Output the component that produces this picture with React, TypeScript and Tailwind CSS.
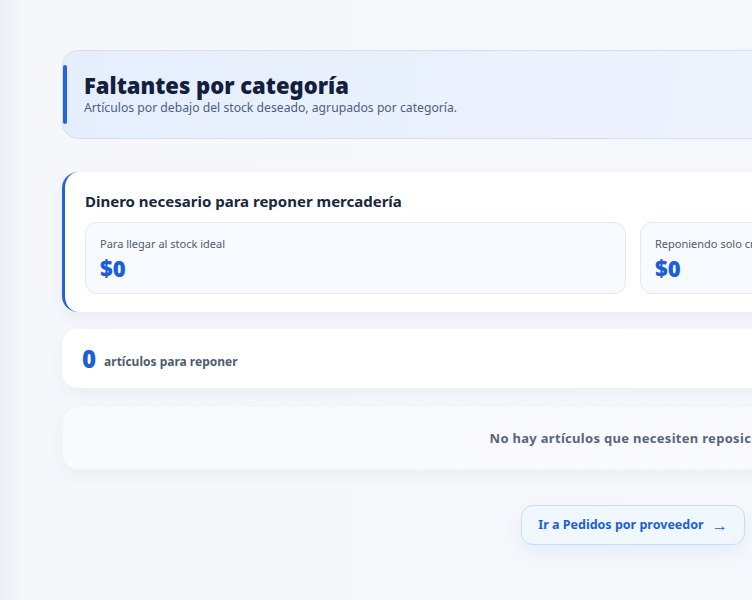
import React from "react";

export default function App() {
  return (
    <div
      className="min-h-[600px] w-full overflow-hidden bg-[linear-gradient(to_right,#eceef3_0px,#f5f7fb_22px,#f6f8fc_100%)]"
      style={{ fontFamily: '"Noto Sans", "Open Sans", sans-serif' }}
    >
      <div className="w-[1142px] ml-[62px] pt-[50px] pb-[56px] flex flex-col">
        {/* Header */}
        <div className="relative rounded-[16px] border border-[#d3def0] bg-[linear-gradient(100deg,#e5eefd_0%,#edf3fd_60%,#f1f5fc_100%)] h-[89px] flex flex-col justify-center pl-[21px]">
          <div className="absolute left-0 top-[14px] bottom-[14px] w-[4px] rounded-full bg-[#2563d9]" />
          <h1 className="text-[22px] leading-[26px] font-black text-[#13203d] mt-[-2px]">
            Faltantes por categoría
          </h1>
          <p className="text-[12.2px] leading-[16px] mt-[2px] text-[#4b5e7d]">
            Artículos por debajo del stock deseado, agrupados por categoría.
          </p>
        </div>

        {/* Money card */}
        <div className="mt-[33px] rounded-[16px] bg-white border-l-[3px] border-[#2563d9] shadow-[0_6px_16px_rgba(30,50,90,0.06)] pl-[20px] pr-[23px] pt-[19px] pb-[18px]">
          <h2 className="text-[15px] leading-[20px] font-bold text-[#1b2740]">
            Dinero necesario para reponer mercadería
          </h2>
          <div className="mt-[11px] grid grid-cols-2 gap-[14px]">
            <div className="rounded-[12px] border border-[#e1e9f5] bg-[#f7faff] h-[72px] px-[14px] pt-[14px]">
              <div className="text-[11px] leading-[14px] text-[#4f5b6e]">
                Para llegar al stock ideal
              </div>
              <div className="mt-[4px] text-[22px] leading-[26px] font-black text-[#1a5fd8]">
                $0
              </div>
            </div>
            <div className="rounded-[12px] border border-[#e1e9f5] bg-[#f7faff] h-[72px] px-[14px] pt-[14px]">
              <div className="text-[11px] leading-[14px] text-[#4f5b6e]">
                Reponiendo solo críticos
              </div>
              <div className="mt-[4px] text-[22px] leading-[26px] font-black text-[#1a5fd8]">
                $0
              </div>
            </div>
          </div>
        </div>

        {/* Count card */}
        <div className="mt-[17px] rounded-[16px] bg-white shadow-[0_6px_16px_rgba(30,50,90,0.05)] h-[59px] flex items-center pl-[20px]">
          <span className="text-[24px] leading-[30px] font-black text-[#1a5fd8]">0</span>
          <span className="ml-[8px] mt-[6px] text-[12px] leading-[16px] font-bold text-[#4f5b6e]">
            artículos para reponer
          </span>
        </div>

        {/* Empty state */}
        <div className="mt-[18px] rounded-[16px] bg-[#f8fafd] border border-dashed border-[#eef1f6] shadow-[0_6px_16px_rgba(30,50,90,0.05)] h-[64px] flex items-center justify-center">
          <span className="text-[13px] leading-[18px] font-bold tracking-[0.3px] text-[#5b6579]">
            No hay artículos que necesiten reposición.
          </span>
        </div>

        {/* Button */}
        <div className="mt-[35px] flex justify-center">
          <button className="h-[40px] px-[16px] rounded-[12px] border border-[#c9dcf6] bg-[#f1f7ff] shadow-[0_8px_18px_rgba(37,99,217,0.08)] flex items-center gap-[8px] text-[12.5px] font-bold text-[#1a5fd8]">
            <span>Ir a Pedidos por proveedor</span>
            <span className="text-[16px] leading-[16px]">→</span>
          </button>
        </div>
      </div>
    </div>
  );
}
